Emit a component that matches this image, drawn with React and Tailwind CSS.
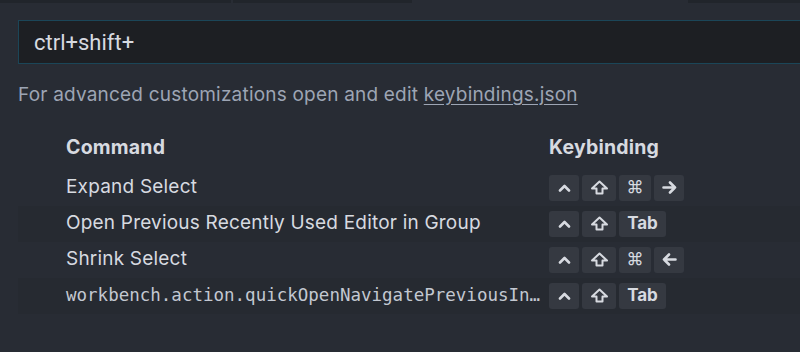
import { useState } from 'react';

const rows = [
  { command: 'Expand Select', keys: ['ctrl', 'shift', 'cmd', 'right'] },
  { command: 'Open Previous Recently Used Editor in Group', keys: ['ctrl', 'shift', 'Tab'] },
  { command: 'Shrink Select', keys: ['ctrl', 'shift', 'cmd', 'left'] },
  { command: 'workbench.action.quickOpenNavigatePreviousInEditorPicker', keys: ['ctrl', 'shift', 'Tab'], mono: true },
];

const Glyph = ({ name }) => {
  if (name === 'ctrl')
    return (
      <svg width="13" height="8" viewBox="0 0 13 8" fill="none" stroke="#d7dae0" strokeWidth="2.6" strokeLinecap="round" strokeLinejoin="round">
        <path d="M2 6.5 L6.5 2 L11 6.5" />
      </svg>
    );
  if (name === 'shift')
    return (
      <svg width="19" height="15" viewBox="0 0 19 15" fill="none" stroke="#d7dae0" strokeWidth="2" strokeLinejoin="round">
        <path d="M9.5 1.5 L17 8.5 H12.5 V13.5 H6.5 V8.5 H2 Z" />
      </svg>
    );
  if (name === 'right' || name === 'left')
    return (
      <svg width="15" height="13" viewBox="0 0 15 13" fill="none" stroke="#d7dae0" strokeWidth="2.6" strokeLinecap="round" strokeLinejoin="round" className={name === 'left' ? '-scale-x-100' : ''}>
        <path d="M1.5 6.5 H13 M8 1.5 L13 6.5 L8 11.5" />
      </svg>
    );
  if (name === 'cmd') return <span className="text-[17px] font-normal">⌘</span>;
  return name;
};

const Key = ({ name }) => (
  <span
    className={`flex h-[26px] items-center justify-center rounded-[3px] bg-[#353941] text-[17px] font-bold text-[#d7dae0] ${
      name === 'Tab' ? 'w-[47px]' : name === 'shift' ? 'w-[34px]' : name === 'cmd' ? 'w-[32px]' : 'w-[30px]'
    }`}
  >
    <Glyph name={name} />
  </span>
);

export default function App() {
  const [query, setQuery] = useState('ctrl+shift+');

  return (
    <div className="h-[352px] w-[800px] overflow-hidden bg-[#282c34] font-['Inter','Liberation_Sans',sans-serif]">
      {/* Tabs strip */}
      <div className="flex h-[3px]">
        <div className="w-[231px] bg-[#21252b]" />
        <div className="w-[2px]" />
        <div className="w-[179px] bg-[#21252b]" />
        <div className="w-[276px]" />
        <div className="flex-1 bg-[#21252b]" />
      </div>

      {/* Search */}
      <div className="pl-[18px] pt-[17px]">
        <input
          value={query}
          onChange={(e) => setQuery(e.target.value)}
          className="h-[44px] w-[800px] border border-[#1b4658] bg-[#1d1f23] px-[15px] font-['Roboto',sans-serif] text-[22px] text-[#d7dae0] outline-none"
        />
      </div>

      <p className="mt-[17px] pl-[18px] text-[19px] tracking-[0.2px] text-[#9da5b4]">
        For advanced customizations open and edit{' '}
        <span className="underline underline-offset-[3px]">keybindings.json</span>
      </p>

      {/* Table */}
      <div className="mt-[19px] pl-[18px]">
        <div className="flex h-[38px] items-center text-[19.5px] font-bold tracking-[0.2px] text-[#d7dae0]">
          <div className="w-[531px] pl-[48px]">Command</div>
          <div>Keybinding</div>
        </div>
        <div className="pt-[3px]">
          {rows.map((row, i) => (
            <div
              key={i}
              className={`flex h-[36px] items-center ${i % 2 === 1 ? 'bg-[#262a31]' : ''}`}
            >
              <div
                className={`w-[531px] truncate pl-[48px] pr-[8px] ${
                  row.mono
                    ? "font-['DejaVu_Sans_Mono',monospace] text-[17.5px] text-[#c3c8d1]"
                    : 'text-[19px] tracking-[0.2px] text-[#d7dae0]'
                }`}
              >
                {row.command}
              </div>
              <div className="flex gap-[3px]">
                {row.keys.map((k, j) => (
                  <Key key={j} name={k} />
                ))}
              </div>
            </div>
          ))}
        </div>
      </div>
    </div>
  );
}
